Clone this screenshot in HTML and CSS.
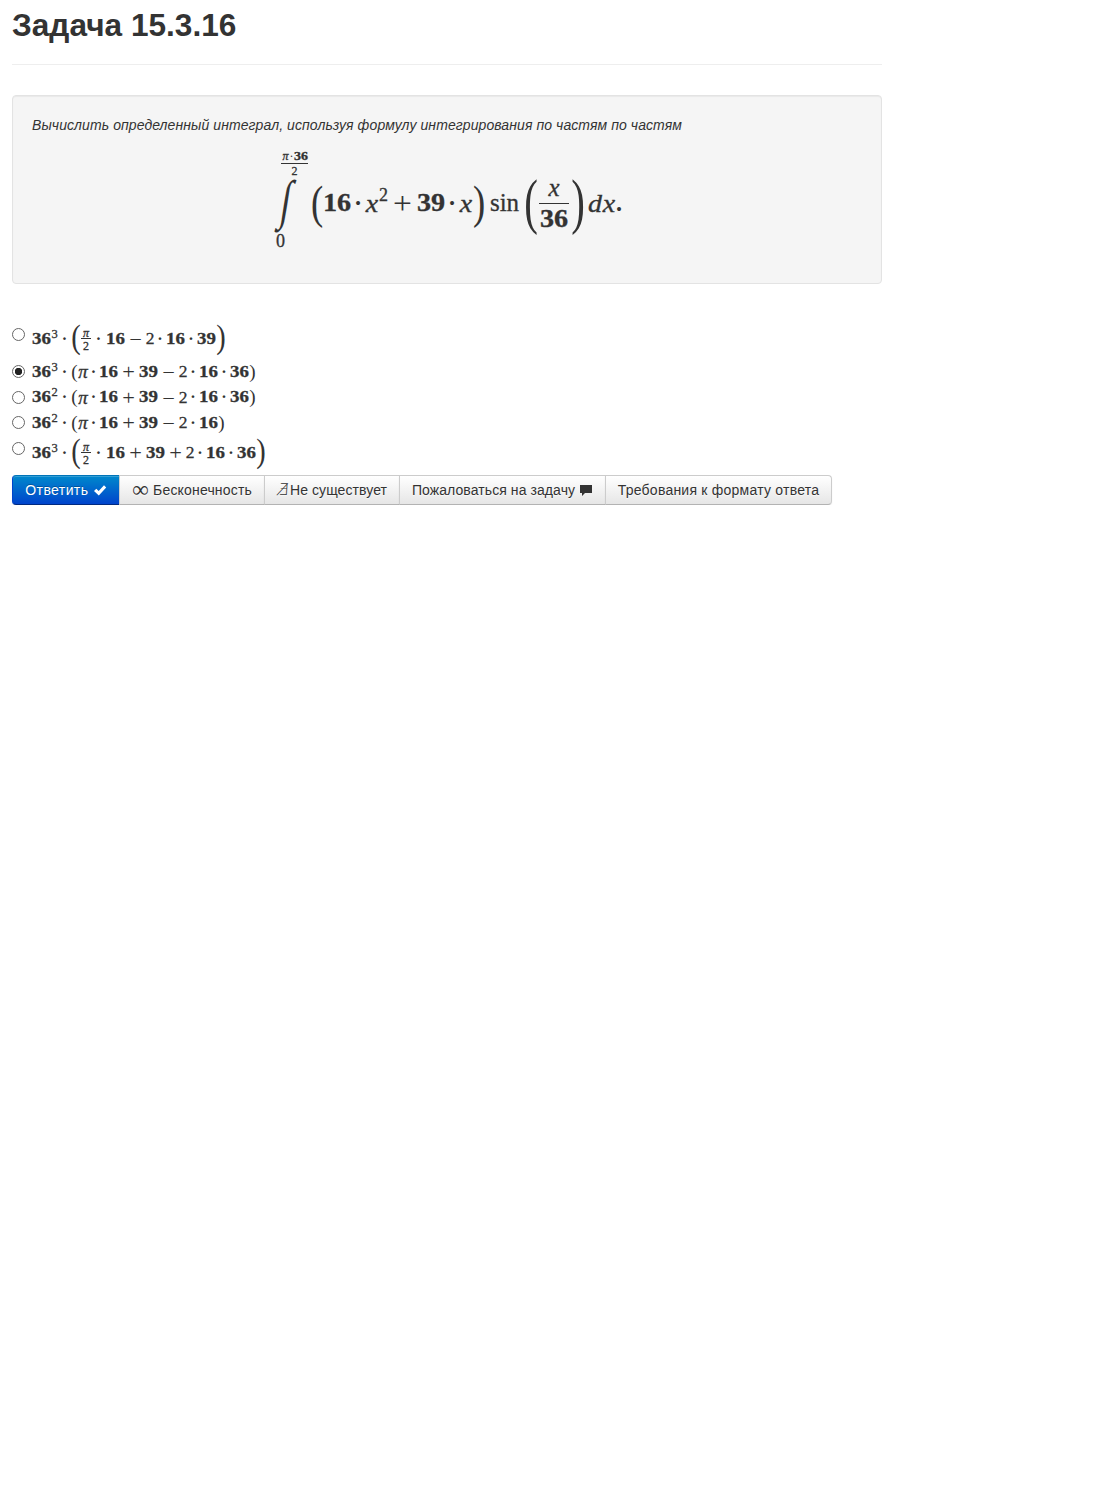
FILE: index.html
```html
<!DOCTYPE html>
<html lang="ru">
<head>
<meta charset="utf-8">
<title>Задача 15.3.16</title>
<link rel="stylesheet" href="styles.css">
</head>
<body>
<main>
<h1>Задача 15.3.16</h1>
<section class="well">
<p>Вычислить определенный интеграл, используя формулу интегрирования по частям по частям</p>
<div class="math display">
<div class="integral">
<div class="upper"><span class="num"><i>π</i><span>·</span><b>36</b></span><span class="den">2</span></div>
<div class="sign"><span>∫</span></div>
<div class="lower">0</div>
</div>
<span class="paren medium">(</span><b>16</b><span class="dot">·</span><i>x</i><sup>2</sup><span class="op">+</span><b>39</b><span class="dot">·</span><i>x</i><span class="paren medium">)</span><span class="sin">sin</span><span class="paren large">(</span><span class="frac"><i>x</i><b>36</b></span><span class="paren large">)</span><i class="d">d</i><i>x</i><span class="period">.</span>
</div>
</section>
<form class="options">
<label class="tall first"><input type="radio" name="answer"><span class="math"><b>36</b><sup>3</sup><span class="dot">·</span><span class="paren big">(</span><span class="frac"><i>π</i><span>2</span></span><span class="dot wide">·</span><b>16</b><span class="op">−</span><span class="digit">2</span><span class="dot">·</span><b>16</b><span class="dot">·</span><b>39</b><span class="paren big">)</span></span></label>
<label><input type="radio" name="answer" checked><span class="math"><b>36</b><sup>3</sup><span class="dot">·</span><span class="paren">(</span><i>π</i><span class="dot near">·</span><b>16</b><span class="op">+</span><b>39</b><span class="op">−</span><span class="digit">2</span><span class="dot">·</span><b>16</b><span class="dot">·</span><b>36</b><span class="paren">)</span></span></label>
<label class="third"><input type="radio" name="answer"><span class="math"><b>36</b><sup>2</sup><span class="dot">·</span><span class="paren">(</span><i>π</i><span class="dot near">·</span><b>16</b><span class="op">+</span><b>39</b><span class="op">−</span><span class="digit">2</span><span class="dot">·</span><b>16</b><span class="dot">·</span><b>36</b><span class="paren">)</span></span></label>
<label><input type="radio" name="answer"><span class="math"><b>36</b><sup>2</sup><span class="dot">·</span><span class="paren">(</span><i>π</i><span class="dot near">·</span><b>16</b><span class="op">+</span><b>39</b><span class="op">−</span><span class="digit">2</span><span class="dot">·</span><b>16</b><span class="paren">)</span></span></label>
<label class="tall"><input type="radio" name="answer"><span class="math"><b>36</b><sup>3</sup><span class="dot">·</span><span class="paren big">(</span><span class="frac"><i>π</i><span>2</span></span><span class="dot wide">·</span><b>16</b><span class="op">+</span><b>39</b><span class="op">+</span><span class="digit">2</span><span class="dot">·</span><b>16</b><span class="dot">·</span><b>36</b><span class="paren big">)</span></span></label>
</form>
<div class="buttons">
<button class="primary">Ответить <svg width="14" height="14" viewBox="0 0 14 14"><path d="M1 8 3.3 5.7 5.7 8.1 11 2.2 13.2 4.4 5.8 12.4Z" fill="#fff"/></svg></button>
<button class="inf"><span class="infinity">∞</span> Бесконечность</button>
<button class="none"><span class="nexists">∄</span>Не существует</button>
<button class="report">Пожаловаться на задачу <svg width="14" height="14" viewBox="0 0 14 14"><path d="M1 2H13V10H6L3 13V10H1Z" fill="#333"/></svg></button>
<button class="format">Требования к формату ответа</button>
</div>
</main>
</body>
</html>
```
FILE: styles.css
```css
* { box-sizing: border-box; }
body { margin: 0; background: #fff; color: #333; font: 14px/20px "Liberation Sans", Arial, sans-serif; }
main { width: 870px; margin-left: 12px; }
h1 { margin: 0 0 30px; height: 65px; padding-top: 5px; border-bottom: 1px solid #eee; font-size: 31.6px; line-height: 40px; }
.well { height: 189px; padding: 19px; background: #f5f5f5; border: 1px solid #e3e3e3; border-radius: 4px; box-shadow: inset 0 1px 1px rgba(0,0,0,.05); }
.well p { margin: 0; font-style: italic; letter-spacing: .087px; }

.math { display: flex; align-items: center; font: 16.3px/1 "Liberation Serif", "Times New Roman", serif; white-space: nowrap; height: 20px; padding-top: 1px; }
.math > * { display: flex; justify-content: center; flex: none; }
.math b { transform: scaleX(1.16); -webkit-text-stroke: .3px #333; }
.math > b { width: 19px; }
.math sup { width: 7px; font-size: 12.5px; line-height: 1; transform: translateY(-5px); vertical-align: baseline; -webkit-text-stroke: .3px #333; }
.math i, .sin, .digit, .lower, .den, .options .frac span { -webkit-text-stroke: .3px #333; }
.dot { width: 12px; font-weight: bold; }
.near { width: 11px; }
.wide { width: 15px; }
.op { width: 21px; font-size: 20px; transform: translateY(-.5px) scaleX(1.12); }
.digit { width: 8px; font-size: 17.5px; transform: translateY(-.5px); }
.math > i { width: 10px; font-size: 18px; transform: translateY(-.5px) scaleX(1.05); }
.paren { width: 7px; font-size: 19px; transform: translateY(-1px); }
.math sup + .dot { width: 13px; }
.big { width: 10px; font-size: 33px; transform: translateY(-2.5px) scaleX(.86); }
.options .frac { width: 10px; flex-direction: column; align-items: center; font-size: 12px; }
.options .frac i { width: 100%; text-align: center; border-bottom: 1px solid #333; line-height: 11px; height: 11px; }
.options .frac span { line-height: 14px; height: 11px; }

.display { height: 101px; margin: 11px 0 0 243px; font-size: 24.3px; padding-top: 13px; }
.display > b { width: 28px; }
.display > i { width: 14px; font-size: 25px; transform: scaleX(1.12); }
.display sup { width: 9px; font-size: 18px; transform: translateY(-8px); }
.display .dot { width: 14px; }
.display .op { width: 29px; font-size: 31px; transform: scaleX(1.08); }
.display .medium { width: 12px; font-size: 47px; transform: translateY(-1px) scaleX(.78); }
.display .sin { width: 39px; font-size: 25px; transform: translateY(-1px); }
.display .large { width: 14px; font-size: 62px; transform: translateY(-2px) scaleX(.66); }
.display .frac { width: 34px; padding: 0 2px; margin-left: -1px; flex-direction: column; }
.frac > * { text-align: center; }
.display .frac i { height: 29px; font-size: 25px; line-height: 26px; border-bottom: 1px solid #333; }
.display .frac b { height: 28px; line-height: 29px; width: 30px; }
.display .d { margin-left: 3px; }
.display .period { width: 8px; margin-left: -1px; font-weight: bold; }
.display .integral { width: 36px; height: 101px; flex-direction: column; justify-content: flex-start; margin-top: -6px; }
.upper { width: 27px; height: 27px; margin-left: 6px; font-size: 12px; text-align: center; display: flex; flex-direction: column; }
.upper .num { display: flex; justify-content: center; gap: 1px; height: 14px; border-bottom: 1px solid #333; line-height: 13px; }
.upper .den { height: 13px; line-height: 14px; }
.sign { width: 22px; height: 55px; display: flex; justify-content: center; align-items: center; font-size: 54px; }
.sign span { transform: translateY(-4px) skewX(-9deg) scaleX(.68); }
.lower { width: 11px; text-align: center; font-size: 18px; height: 18px; line-height: 18px; }

.options { margin-top: 34px; }
label { display: flex; align-items: center; height: 25px; }
.third { height: 26px; }
.tall { height: 35px; margin-bottom: 5px; }
.tall.first { height: 41px; margin: 0; }
.tall input { margin-top: -8px; }
input { appearance: none; flex: none; width: 13px; height: 13px; margin: 0 7px 0 0; border: 1px solid #666; border-radius: 50%; background: #fff; }
input:checked { background: radial-gradient(circle, #222 0 3.4px, #fff 4px); }

.buttons { display: flex; }
button { height: 30px; padding: 4px 0; margin-left: -1px; border: 1px solid #bbb; border-color: #ccc #ccc #b3b3b3; background: linear-gradient(#fff, #e6e6e6); color: #333; font: 14px/20px "Liberation Sans", Arial, sans-serif; white-space: nowrap; box-shadow: inset 0 1px 0 rgba(255,255,255,.2), 0 1px 2px rgba(0,0,0,.05); text-shadow: 0 1px 1px rgba(255,255,255,.75); }
button:first-child { margin-left: 0; border-radius: 4px 0 0 4px; }
button:last-child { border-radius: 0 4px 4px 0; }
.primary { width: 108px; letter-spacing: .4px; color: #fff; background: linear-gradient(#08c, #04c); border-color: #0074b8 #04c #002a80; text-shadow: 0 -1px 0 rgba(0,0,0,.25); }
.inf { width: 146px; letter-spacing: .17px; }
.none { width: 136px; letter-spacing: .08px; }
.report { width: 207px; letter-spacing: .08px; }
.format { width: 227px; letter-spacing: .23px; }
button svg { vertical-align: -2px; }
.infinity { display: inline-block; width: 17px; font: 23px/16px "Liberation Serif", serif; vertical-align: -2px; }
.nexists { display: inline-block; width: 13px; font: 200 16px/16px "DejaVu Sans", sans-serif; transform: skewX(-4deg); }
```
